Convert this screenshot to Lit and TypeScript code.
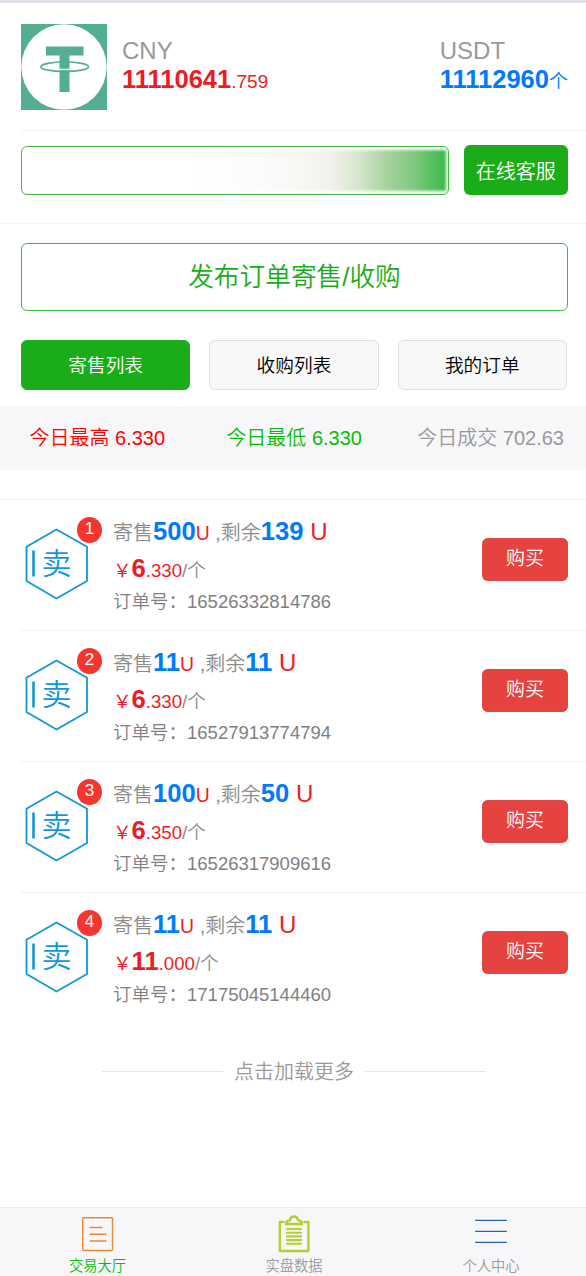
import { LitElement, html, css } from "lit";
import { customElement, property } from "lit/decorators.js";

const fonts = css`"Liberation Sans", "Noto Sans CJK SC", sans-serif`;

interface Order {
  total: string;
  left: string;
  whole: string;
  frac: string;
  id: string;
}

const orders: Order[] = [
  { total: "500", left: "139", whole: "6", frac: ".330", id: "16526332814786" },
  { total: "11", left: "11", whole: "6", frac: ".330", id: "16527913774794" },
  { total: "100", left: "50", whole: "6", frac: ".350", id: "16526317909616" },
  { total: "11", left: "11", whole: "11", frac: ".000", id: "17175045144460" },
];

@customElement("order-row")
class OrderRow extends LitElement {
  @property({ attribute: false }) order!: Order;
  @property({ type: Number }) index = 1;

  static styles = css`
    :host {
      display: flex;
      height: 131.1px;
      box-sizing: border-box;
      padding: 0 18px 0 4px;
      font-family: ${fonts};
      font-weight: 350;
      color: #8c8c8c;
    }
    .badge-wrap {
      position: relative;
      width: 63px;
      height: 72px;
      margin-top: 28px;
    }
    .hex { display: block; }
    .glyph {
      font-size: 30px;
      font-weight: 350;
      fill: #1296db;
    }
    .badge {
      position: absolute;
      left: 52px;
      top: -11.5px;
      width: 25px;
      height: 26px;
      border-radius: 50%;
      background: #f43530;
      color: #fff;
      font-size: 17px;
      line-height: 24px;
      text-align: center;
    }
    .info { flex: 1; margin-left: 25px; padding-top: 15px; }
    .line { display: flex; align-items: baseline; white-space: pre; }
    .l1 { height: 37px; font-size: 20px; line-height: 32px; }
    .l2 { height: 34.5px; font-size: 18.6px; line-height: 32px; }
    .l3 { height: 30px; font-size: 18.5px; line-height: 30px; color: #808080; }
    .amount { color: #007aff; font-size: 25.6px; font-weight: bold; }
    .unit { color: #ed1c24; font-size: 19.4px; }
    .big { color: #ed1c24; font-size: 24px; }
    .price { color: #ed1c24; }
    .yen { font-weight: 400; }
    .whole { color: #ed1c24; font-size: 25.6px; font-weight: bold; }
    .buy {
      width: 86px;
      height: 43px;
      margin-top: 38px;
      border-radius: 6px;
      background: #e64340;
      box-shadow: inset 0 0 0 1px #d4504d80;
      color: #fff;
      font-size: 19px;
      line-height: 42px;
      text-align: center;
    }
  `;

  render() {
    const o = this.order;
    return html`
      <div class="badge-wrap">
        <svg class="hex" width="63" height="72" viewBox="0 0 63 72">
          <path d="M31.5 1.5 62 18.8V53L31.5 70.5 1.5 53V18.8Z" fill="none" stroke="#1296db" stroke-width="1.8" />
          <path d="M8.5 22.5V48.5" stroke="#1296db" stroke-width="2.6" />
          <text class="glyph" x="16.5" y="45.5">卖</text>
        </svg>
        <span class="badge">${this.index}</span>
      </div>
      <div class="info">
        <div class="line l1"><span>寄售</span><span class="amount">${o.total}</span><span class="unit">U</span><span> ,剩余</span><span class="amount">${o.left}</span><span class="big"> U</span></div>
        <div class="line l2"><span class="price yen">￥</span><span class="whole">${o.whole}</span><span class="price">${o.frac}</span><span>/个</span></div>
        <div class="line l3"><span>订单号：${o.id}</span></div>
      </div>
      <div class="buy">购买</div>
    `;
  }
}

@customElement("app-root")
class AppRoot extends LitElement {
  static styles = css`
    :host {
      display: flex;
      flex-direction: column;
      height: 1276px;
      overflow: hidden;
      background: #fff;
      font-family: ${fonts};
      font-weight: 350;
      color: #999;
    }
    * { box-sizing: border-box; }
    .strip { height: 3px; background: linear-gradient(#e6eaf3 1px, #d5d8e3 1px 2px, #e4e6ea 2px); }
    .account { height: 127px; margin-left: 21px; padding: 20.5px 18px 0 0; display: flex; }
    .logo { width: 86px; height: 86px; flex: none; }
    .balance { margin-left: 15px; padding-top: 13.5px; }
    .balance.right { margin-left: auto; }
    .label { font-size: 24px; line-height: 28px; }
    .value { font-size: 19px; line-height: 29px; white-space: nowrap; }
    .value b { font-size: 25.5px; font-weight: 700; }
    .red { color: #ed1c24; }
    .blue { color: #007aff; }
    .service { height: 93px; margin-left: 21px; padding: 14px 18px 0 0; border-top: 1px solid #f2f2f2; display: flex; }
    .field {
      width: 428px;
      height: 49px;
      margin-top: 0.5px;
      border: 1px solid #47b547;
      border-radius: 6px;
      padding: 3px 2px;
      display: flex;
      justify-content: flex-end;
    }
    .shade {
      width: 250px;
      filter: blur(1.5px);
      background: linear-gradient(90deg, #fff 0, #faf9f7 38%, #f1f0ea 54%, #d6e6ce 65%, #a8d3a0 76%, #7cc67c 88%, #3dbb4b 99%);
    }
    .help {
      width: 104.5px;
      height: 50px;
      margin-left: auto;
      border-radius: 6px;
      background: #1aad19;
      color: #fff;
      font-size: 20px;
      line-height: 54px;
      text-align: center;
    }
    .publish-wrap { border-top: 1px solid #f5f5f5; padding: 19px 18px 0 21px; }
    .publish {
      height: 68px;
      border: 1px solid #41b840;
      border-radius: 6px;
      color: #1aad19;
      font-size: 25.7px;
      line-height: 66px;
      text-align: center;
    }
    .tabs { display: grid; grid-template-columns: repeat(3, 1fr); gap: 19px; padding: 29px 19px 16px 21px; }
    .tab {
      height: 50px;
      border: 1px solid #dfdfdf;
      border-radius: 6px;
      background: #f8f8f8;
      color: #000;
      font-size: 18.7px;
      line-height: 49px;
      text-align: center;
    }
    .tab.on { background: #1aad19; border-color: #1aad19; color: #fff; }
    .stats {
      height: 64px;
      padding: 0 22px 0 29.5px;
      display: flex;
      justify-content: space-between;
      background: #f7f7fa;
      font-size: 20px;
      line-height: 65px;
    }
    .high { color: #f00; }
    .low { color: #09bb07; margin-right: -6px; }
    .list { margin-top: 29px; border-top: 1px solid #f2f2f2; padding-left: 21px; }
    .list order-row:not(:last-child) { border-bottom: 1px solid #f2f2f2; }
    .more {
      width: 384px;
      margin: 32.4px 0 0 102px;
      display: flex;
      align-items: center;
      gap: 11px;
      font-size: 20px;
      line-height: 30px;
    }
    .more::before, .more::after { content: ""; flex: 1; height: 1px; background: #e5e5e5; }
    .nav {
      height: 69px;
      margin-top: auto;
      border-top: 1px solid #ededee;
      background: #f7f7fa;
      display: grid;
      grid-template-columns: 195px 198px 196px;
      font-size: 14.3px;
    }
    .nav-item { display: flex; flex-direction: column; align-items: center; padding-top: 7px; }
    .nav-item span { line-height: 20px; margin-top: 2px; }
    .active { color: #09bb07; }
  `;

  render() {
    return html`
      <div class="strip"></div>
      <header class="account">
        <svg class="logo" viewBox="0 0 86 86">
          <rect width="86" height="86" fill="#53ae94" />
          <circle cx="43" cy="43" r="42.7" fill="#fff" />
          <path d="M25 22.5H62.5V31.5H48.5V68H38.5V31.5H25Z" fill="#53ae94" />
          <path d="M38.5 45.5H48.5" stroke="#fff" stroke-width="1.5" />
          <ellipse cx="43.7" cy="42.8" rx="23.8" ry="4.8" fill="none" stroke="#53ae94" stroke-width="1.7" />
        </svg>
        <div class="balance">
          <div class="label">CNY</div>
          <div class="value red"><b>11110641</b>.759</div>
        </div>
        <div class="balance right">
          <div class="label">USDT</div>
          <div class="value blue"><b>11112960</b>个</div>
        </div>
      </header>
      <section class="service">
        <div class="field"><div class="shade"></div></div>
        <div class="help">在线客服</div>
      </section>
      <section class="publish-wrap"><div class="publish">发布订单寄售/收购</div></section>
      <nav class="tabs">
        <div class="tab on">寄售列表</div>
        <div class="tab">收购列表</div>
        <div class="tab">我的订单</div>
      </nav>
      <section class="stats">
        <span class="high">今日最高 6.330</span>
        <span class="low">今日最低 6.330</span>
        <span>今日成交 702.63</span>
      </section>
      <section class="list">
        ${orders.map((o, i) => html`<order-row .order=${o} .index=${i + 1}></order-row>`)}
      </section>
      <div class="more">点击加载更多</div>
      <footer class="nav">
        <div class="nav-item active">
          <svg width="38" height="39" viewBox="0 0 38 39" fill="none" stroke="#e8883a">
            <rect x="3.7" y="2.7" width="29.8" height="32.8" rx="1" stroke-width="1.4" />
            <path d="M10.5 12.5H23.5M10.5 19.3H27.5M10.5 26H27.5" stroke-width="1.5" />
          </svg>
          <span>交易大厅</span>
        </div>
        <div class="nav-item">
          <svg width="38" height="39" viewBox="0 0 38 39" fill="none" stroke="#b4d02c" stroke-width="2.4" stroke-linejoin="round" stroke-linecap="round">
            <path d="M8.5 7H4.8V36H33.4V7H29.5" />
            <path d="M11 9Q11 5.8 15 5Q15.5 1.5 19 1.5T23 5Q27 5.8 27 9Z" />
            <path d="M12 14H26M12 17.7H26M12 21.4H26M12 25.1H26M12 28.8H26" stroke-width="2.1" />
          </svg>
          <span>实盘数据</span>
        </div>
        <div class="nav-item">
          <svg width="38" height="39" viewBox="0 0 38 39" stroke="#2563c0" stroke-width="1.3">
            <path d="M3.2 5.4H34.8M3.2 16.4H34.8M3.2 27.4H34.8" />
          </svg>
          <span>个人中心</span>
        </div>
      </footer>
    `;
  }
}
